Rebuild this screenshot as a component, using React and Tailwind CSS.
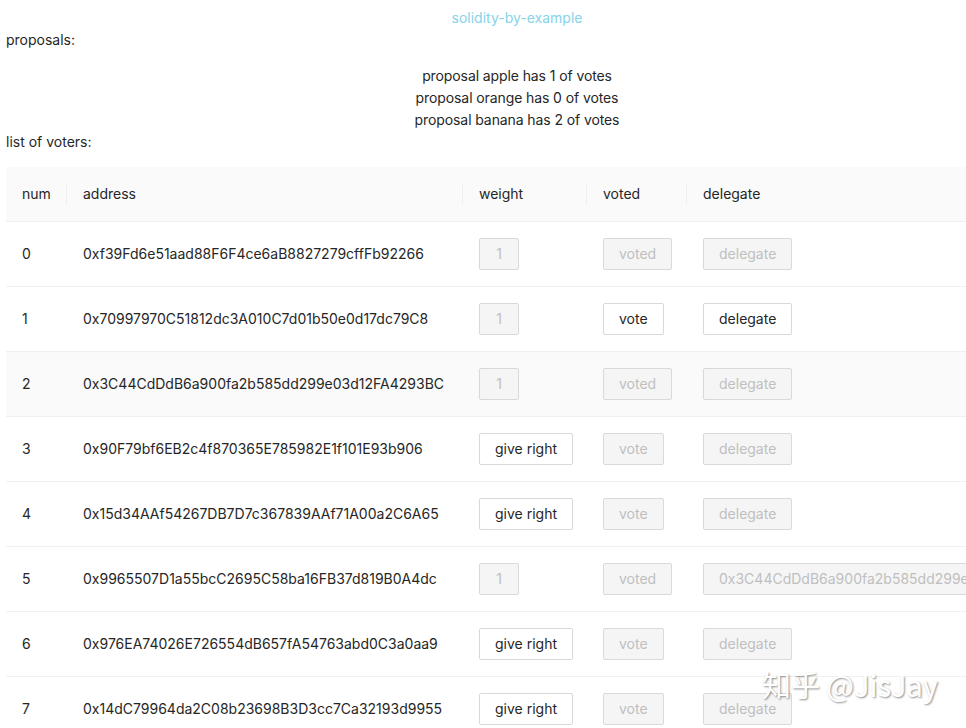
import React from "react";

const rows = [
  { n: 0, a: "0xf39Fd6e51aad88F6F4ce6aB8827279cffFb92266", w: "input", v: "voted", d: "disabled" },
  { n: 1, a: "0x70997970C51812dc3A010C7d01b50e0d17dc79C8", w: "input", v: "vote", d: "enabled" },
  { n: 2, a: "0x3C44CdDdB6a900fa2b585dd299e03d12FA4293BC", w: "input", v: "voted", d: "disabled", hover: true },
  { n: 3, a: "0x90F79bf6EB2c4f870365E785982E1f101E93b906", w: "give", v: "votedis", d: "disabled" },
  { n: 4, a: "0x15d34AAf54267DB7D7c367839AAf71A00a2C6A65", w: "give", v: "votedis", d: "disabled" },
  { n: 5, a: "0x9965507D1a55bcC2695C58ba16FB37d819B0A4dc", w: "input", v: "voted", d: "addr" },
  { n: 6, a: "0x976EA74026E726554dB657fA54763abd0C3a0aa9", w: "give", v: "votedis", d: "disabled" },
  { n: 7, a: "0x14dC79964da2C08b23698B3D3cc7Ca32193d9955", w: "give", v: "votedis", d: "disabled" },
];

const btnBase = "h-[32px] px-[15px] border border-[#d9d9d9] rounded-[2px] text-[14px] leading-[22px] whitespace-nowrap";
const enabled = btnBase + " bg-white text-[#262626]";
const disabled = btnBase + " bg-[#f5f5f5] text-[#bfbfbf]";

function Sep() {
  return <span className="absolute right-0 top-1/2 -translate-y-1/2 w-px h-[22px] bg-[#f0f0f0]" />;
}

export default function App() {
  return (
    <div className="relative w-full overflow-hidden bg-white min-h-[728px]" style={{ fontFamily: "Inter, 'Noto Sans', sans-serif" }}>
      <div className="w-[1034px] px-[6px] pt-[7px] text-[14px] leading-[22px] text-[#262626]">
        <div className="text-center text-[#86d3ea]">solidity-by-example</div>
        <div>proposals:</div>
        <div className="mt-[14px] text-center tracking-[-0.1px]">
          <div>proposal apple has 1 of votes</div>
          <div>proposal orange has 0 of votes</div>
          <div>proposal banana has 2 of votes</div>
        </div>
        <div>list of voters:</div>
        <div className="mt-[14px]">
          <div className="grid grid-cols-[61px_396px_124px_100px_1fr] h-[55px] bg-[#fafafa] border-b border-[#f0f0f0]">
            <div className="relative flex items-center px-4">num<Sep /></div>
            <div className="relative flex items-center px-4">address<Sep /></div>
            <div className="relative flex items-center px-4">weight<Sep /></div>
            <div className="relative flex items-center px-4">voted<Sep /></div>
            <div className="relative flex items-center px-4">delegate</div>
          </div>
          {rows.map((r) => (
            <div
              key={r.n}
              className={"grid grid-cols-[61px_396px_124px_100px_1fr] h-[65px] border-b border-[#f0f0f0] " + (r.hover ? "bg-[#fafafa]" : "bg-white")}
            >
              <div className="flex items-center px-4">{r.n}</div>
              <div className="flex items-center px-4 whitespace-nowrap">{r.a}</div>
              <div className="flex items-center px-4">
                {r.w === "input" ? (
                  <div className="w-[40px] h-[32px] border border-[#d9d9d9] rounded-[2px] bg-[#f5f5f5] text-[#bfbfbf] flex items-center justify-center">1</div>
                ) : (
                  <button className={enabled}>give right</button>
                )}
              </div>
              <div className="flex items-center px-4">
                {r.v === "voted" && <button className={disabled}>voted</button>}
                {r.v === "vote" && <button className={enabled}>vote</button>}
                {r.v === "votedis" && <button className={disabled}>vote</button>}
              </div>
              <div className="flex items-center px-4 overflow-hidden">
                {r.d === "disabled" && <button className={disabled}>delegate</button>}
                {r.d === "enabled" && <button className={enabled}>delegate</button>}
                {r.d === "addr" && (
                  <div className="h-[32px] w-[330px] shrink-0 border border-[#d9d9d9] rounded-[2px] bg-[#f5f5f5] text-[#bfbfbf] flex items-center pl-[15px] whitespace-nowrap overflow-hidden">
                    0x3C44CdDdB6a900fa2b585dd299e03d12FA4293BC
                  </div>
                )}
              </div>
            </div>
          ))}
        </div>
      </div>
      <div
        className="absolute left-[762px] top-[664px] text-[29px] leading-[40px] text-white whitespace-nowrap"
        style={{ fontFamily: "'Noto Sans CJK SC', 'Noto Sans', sans-serif", textShadow: "1px 1px 2px rgba(0,0,0,0.45)" }}
      >
        知乎 @JisJay
      </div>
    </div>
  );
}
